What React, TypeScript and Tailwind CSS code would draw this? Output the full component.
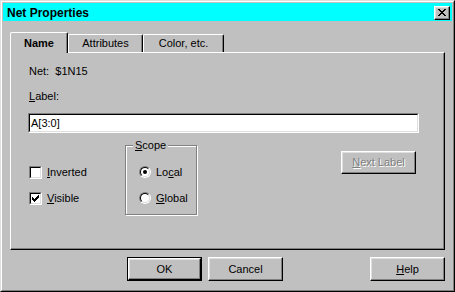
import React from 'react'

const raised =
  'border-t border-l border-r border-b border-t-white border-l-white border-r-black border-b-black shadow-[inset_-1px_-1px_#808080,inset_1px_1px_#dfdfdf]'
const sunkenOuter = 'border-t border-l border-r border-b border-t-[#808080] border-l-[#808080] border-r-white border-b-white'
const sunkenInner = 'border-t border-l border-r border-b border-t-black border-l-black border-r-[#dfdfdf] border-b-[#dfdfdf] bg-white'

const CloseGlyph = () => (
  <svg width="8" height="7" viewBox="0 0 8 7" shapeRendering="crispEdges">
    <path
      d="M0 0h2v1h-2zM6 0h2v1h-2zM1 1h2v1h-2zM5 1h2v1h-2zM2 2h4v1h-4zM3 3h2v1h-2zM2 4h4v1h-4zM1 5h2v1h-2zM5 5h2v1h-2zM0 6h2v1h-2zM6 6h2v1h-2z"
      fill="#000"
    />
  </svg>
)

const CheckGlyph = () => (
  <svg width="7" height="7" viewBox="0 0 7 7" shapeRendering="crispEdges">
    <path
      d="M6 0h1v1h-1zM5 1h2v1h-2zM0 2h1v1h-1zM4 2h3v1h-3zM0 3h2v1h-2zM3 3h3v1h-3zM0 4h5v1h-5zM1 5h3v1h-3zM2 6h1v1h-1z"
      fill="#000"
    />
  </svg>
)

const Checkbox: React.FC<{ checked?: boolean; label: React.ReactNode }> = ({ checked, label }) => (
  <div className="flex items-center h-[13px]">
    <div className={`w-[13px] h-[13px] ${sunkenOuter}`}>
      <div className={`w-full h-full flex items-center justify-center ${sunkenInner}`}>
        {checked && <CheckGlyph />}
      </div>
    </div>
    <span className="ml-[5px] leading-[13px]">{label}</span>
  </div>
)

const Radio: React.FC<{ checked?: boolean; label: React.ReactNode }> = ({ checked, label }) => (
  <div className="flex items-center h-[12px]">
    <div className={`w-[12px] h-[12px] rounded-full ${sunkenOuter}`}>
      <div className={`w-full h-full rounded-full flex items-center justify-center ${sunkenInner}`}>
        {checked && <div className="w-[4px] h-[4px] rounded-full bg-black" />}
      </div>
    </div>
    <span className="ml-[5px] leading-[13px]">{label}</span>
  </div>
)

const Button: React.FC<{ children: React.ReactNode; isDefault?: boolean; disabled?: boolean; className?: string }> = ({
  children,
  isDefault,
  disabled,
  className = '',
}) => {
  const text = disabled ? 'text-[#808080] [text-shadow:1px_1px_0_#fff]' : 'text-black'
  if (isDefault) {
    return (
      <div className={`w-[75px] h-[24px] border border-black ${className}`}>
        <div className={`w-full h-full flex items-center justify-center ${raised} ${text}`}>{children}</div>
      </div>
    )
  }
  return (
    <div className={`w-[75px] h-[24px] flex items-center justify-center ${raised} ${text} ${className}`}>
      {children}
    </div>
  )
}

export default function App() {
  return (
    <div className="w-[455px] h-[292px] font-['Liberation_Sans',Arial,sans-serif] text-[11px] text-black select-none">
      <div className="w-full h-full border-t border-l border-r border-b border-t-[#dfdfdf] border-l-[#dfdfdf] border-r-black border-b-black">
        <div className="w-full h-full border-t border-l border-r border-b border-t-white border-l-white border-r-[#808080] border-b-[#808080] bg-[#c0c0c0] p-[1px] flex flex-col">
          {/* title bar */}
          <div className="h-[18px] bg-[#00ffff] flex items-center justify-between pl-[4px] pr-[2px] pt-[1px]">
            <span className="font-bold text-[12px] leading-[14px]">Net Properties</span>
            <div className={`w-[16px] h-[14px] bg-[#c0c0c0] flex items-center justify-center ${raised}`}>
              <CloseGlyph />
            </div>
          </div>

          <div className="pl-[7px] pr-[7px] mt-[11px] flex flex-col">
            {/* tabs */}
            <div className="flex items-end h-[20px]">
              <div className="relative z-10 w-[58px] h-[21px] -mb-[1px] bg-[#c0c0c0] border-t border-l border-r border-t-white border-l-white border-r-black rounded-t-[2px] shadow-[inset_-1px_0_#808080] flex items-start justify-center pt-[4px]">
                <span className="font-bold leading-[13px]">Name</span>
              </div>
              <div className="w-[75px] h-[18px] border-t border-l border-r border-t-white border-l-white border-r-black rounded-t-[2px] shadow-[inset_-1px_0_#808080] flex items-start justify-center pt-[2px]">
                <span className="leading-[13px]">Attributes</span>
              </div>
              <div className="w-[81px] h-[18px] border-t border-l border-r border-t-white border-l-white border-r-black rounded-t-[2px] shadow-[inset_-1px_0_#808080] flex items-start justify-center pt-[2px]">
                <span className="leading-[13px]">Color, etc.</span>
              </div>
            </div>

            {/* tab panel */}
            <div className="w-[435px] h-[198px] border-t border-l border-r border-b border-t-white border-l-white border-r-black border-b-black shadow-[inset_-1px_-1px_#808080] pl-[17px] pt-[12px] flex flex-col">
              <div className="leading-[13px] pl-[1px]">Net:&nbsp; $1N15</div>
              <div className="leading-[13px] mt-[12px] pl-[1px]">
                <u>L</u>abel:
              </div>
              <div className={`mt-[10px] w-[391px] h-[20px] ${sunkenOuter}`}>
                <div className={`w-full h-full ${sunkenInner} flex items-center pl-[1px] leading-[13px]`}>A[3:0]</div>
              </div>

              <div className="flex w-[391px] mt-[8px]">
                <div className="w-[97px] pl-[1px] pt-[25px] flex flex-col gap-[13px]">
                  <Checkbox label={<><u>I</u>nverted</>} />
                  <Checkbox checked label={<><u>V</u>isible</>} />
                </div>

                <div className="relative mt-[4px] w-[72px] h-[70px] border border-[#808080] shadow-[inset_1px_1px_#fff,1px_1px_#fff] pl-[13px] pt-[20px] flex flex-col gap-[14px]">
                  <span className="absolute -top-[7px] left-[7px] px-[2px] bg-[#c0c0c0] leading-[13px]">
                    <u>S</u>cope
                  </span>
                  <Radio checked label={<>Lo<u>c</u>al</>} />
                  <Radio label={<><u>G</u>lobal</>} />
                </div>

                <Button disabled className="ml-auto mr-[3px] mt-[10px] !h-[23px]">
                  <span>
                    <u>N</u>ext Label
                  </span>
                </Button>
              </div>
            </div>

            {/* buttons */}
            <div className="flex mt-[7px] pl-[117px]">
              <Button isDefault>OK</Button>
              <Button className="ml-[6px]">Cancel</Button>
              <Button className="ml-auto">
                <span>
                  <u>H</u>elp
                </span>
              </Button>
            </div>
          </div>
        </div>
      </div>
    </div>
  )
}
